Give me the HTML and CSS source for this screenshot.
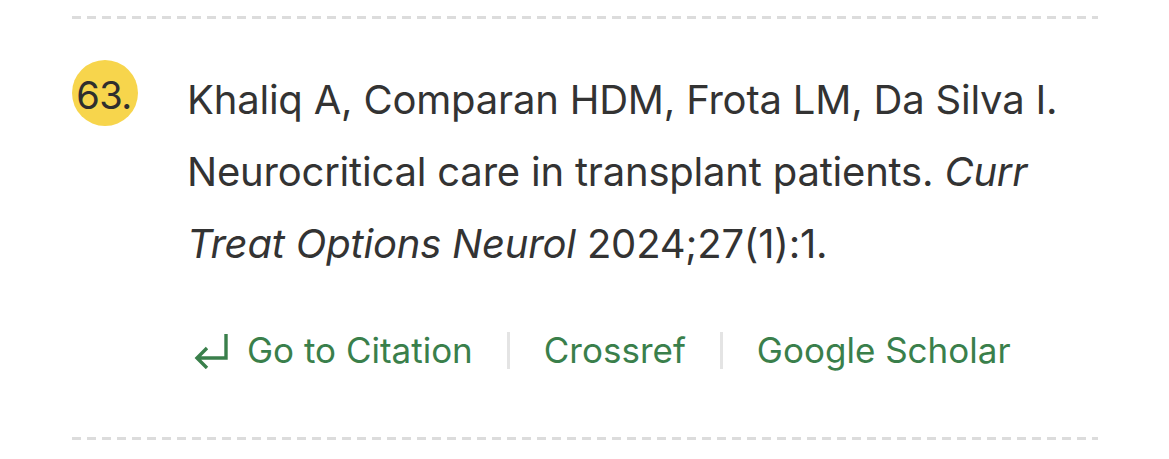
FILE: index.html
```html
<!DOCTYPE html>
<html lang="en">
<head>
<meta charset="utf-8">
<title>Reference 63</title>
<link rel="stylesheet" href="styles.css">
</head>
<body>
<div class="ref">
  <div class="rule"></div>
  <div class="entry">
    <div class="badge"><span>63.</span></div>
    <div class="body">
      <p class="cite"><span>Khaliq A, Comparan HDM, Frota LM, Da Silva I.</span> <span>Neurocritical care in transplant patients.</span> <em>Curr</em> <em>Treat Options Neurol</em> <span>2024;27(1):1.</span></p>
      <div class="links">
        <a class="link goto" href="#">
          <svg class="icon" viewBox="0 0 36 36" width="36" height="36" aria-hidden="true">
            <path d="M33 1 V25 H5 M14 15 L4 25 L14 35" fill="none" stroke="currentColor" stroke-width="3.4" stroke-linecap="butt" stroke-linejoin="miter"/>
          </svg>
          <span>Go to Citation</span>
        </a>
        <span class="sep"></span>
        <a class="link" href="#">Crossref</a>
        <span class="sep"></span>
        <a class="link" href="#">Google Scholar</a>
      </div>
    </div>
  </div>
  <div class="rule bottom"></div>
</div>
</body>
</html>
```
FILE: styles.css
```css
html, body {
  margin: 0;
  padding: 0;
  background: #ffffff;
}

body {
  font-family: Inter, "Noto Sans", "Liberation Sans", sans-serif;
  color: #333333;
}

.ref {
  padding: 16px 71px 0 72px;
}

.rule {
  height: 3px;
  background: repeating-linear-gradient(90deg, #dcdcdc 0 9px, transparent 9px 15px);
}

.rule.bottom {
  margin-top: 67px;
}

.entry {
  display: flex;
  align-items: flex-start;
  gap: 49px;
  padding-top: 45px;
}

.badge {
  flex: none;
  width: 66px;
  height: 66px;
  margin-top: -4px;
  border-radius: 50%;
  background: #f7d54c;
  display: flex;
  align-items: center;
  justify-content: center;
}

.badge span {
  font-size: 38px;
  line-height: 1;
  color: #2e2e2e;
  letter-spacing: -0.5px;
  margin-left: -2px;
  margin-top: 4px;
}

.body {
  flex: 1;
  min-width: 0;
}

.cite {
  margin: 0;
  font-size: 40px;
  line-height: 72px;
  letter-spacing: -0.2px;
  color: #333333;
}

.cite em {
  font-style: italic;
}

.links {
  margin-top: 50px;
  display: flex;
  align-items: center;
  gap: 34px;
  height: 40px;
}

.link {
  color: #3a7f4b;
  text-decoration: none;
  font-size: 35px;
  line-height: 40px;
}

.goto {
  display: flex;
  align-items: center;
  gap: 18px;
  margin-left: 6px;
}

.icon {
  display: block;
  width: 36px;
  height: 36px;
  margin-top: 2px;
}

.sep {
  flex: none;
  width: 3px;
  height: 37px;
  background: #e4e4e4;
}
```
